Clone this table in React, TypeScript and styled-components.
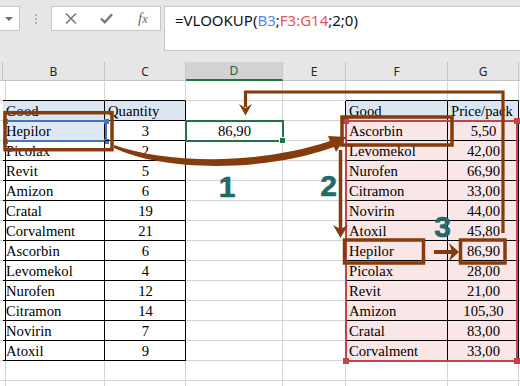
import React from "react";
import styled, { createGlobalStyle } from "styled-components";

const BROWN = "#843c0c";
const TEAL = "#1e6b6a";

const GlobalStyle = createGlobalStyle`
  html, body {
    margin: 0;
    padding: 0;
    background: #fff;
  }
  body {
    font-family: "Liberation Serif", serif;
  }
`;

const Window = styled.div`
  position: relative;
  width: 520px;
  height: 386px;
  overflow: hidden;
  background: #fff;
`;

/* ---------- formula bar ---------- */

const Toolbar = styled.div`
  display: flex;
  align-items: flex-start;
  box-sizing: border-box;
  height: 62px;
  padding-top: 6px;
  background: #e6e6e6;
`;

const NameBox = styled.div`
  box-sizing: border-box;
  width: 20px;
  height: 25px;
  display: flex;
  align-items: center;
  justify-content: center;
  background: #fff;
  border: 1px solid #c6c6c6;
  border-left: none;
`;

const DropArrow = styled.span`
  width: 0;
  height: 0;
  margin-left: -2px;
  border-left: 4px solid transparent;
  border-right: 4px solid transparent;
  border-top: 4px solid #6f6f6f;
`;

const Grip = styled.div`
  display: flex;
  flex-direction: column;
  gap: 2px;
  margin: 8px 0 0 15px;
`;

const GripDot = styled.span`
  width: 2px;
  height: 2px;
  background: #b4b4b4;
`;

const ButtonBox = styled.div`
  box-sizing: border-box;
  width: 110px;
  height: 25px;
  margin-left: 14px;
  display: flex;
  align-items: center;
  gap: 23px;
  padding-left: 13px;
  background: #fff;
  border: 1px solid #c6c6c6;
`;

const BarIcon = styled.svg`
  display: block;
  flex: none;
`;

const Fx = styled.span`
  font-family: "Liberation Serif", serif;
  font-style: italic;
  font-size: 15px;
  line-height: 1;
  color: #6b6b6b;
  margin-left: 2px;
  small {
    font-size: 12px;
  }
`;

const FormulaInput = styled.div`
  box-sizing: border-box;
  flex: 1;
  height: 45px;
  margin-left: 3px;
  padding: 3px 0 0 10px;
  background: #fff;
  border: 1px solid #c6c6c6;
  border-right: none;
  font-family: "Noto Sans", sans-serif;
  font-size: 15px;
  line-height: 20px;
  color: #111;
  white-space: nowrap;
`;

const Ref = styled.span<{ $color: string }>`
  color: ${(p) => p.$color};
`;

/* ---------- worksheet ---------- */

// the last column runs past the window edge, so it gets no letter
const COLS = [
  { id: "corner", label: "", w: 3 },
  { id: "B", label: "B", w: 102 },
  { id: "C", label: "C", w: 81 },
  { id: "D", label: "D", w: 97 },
  { id: "E", label: "E", w: 63 },
  { id: "F", label: "F", w: 102 },
  { id: "G", label: "G", w: 71 },
  { id: "H", label: "", w: 60 },
];

const ROWS = 16;

const goods: [string, number][] = [
  ["Hepilor", 3],
  ["Picolax", 2],
  ["Revit", 5],
  ["Amizon", 6],
  ["Cratal", 19],
  ["Corvalment", 21],
  ["Ascorbin", 6],
  ["Levomekol", 4],
  ["Nurofen", 12],
  ["Citramon", 14],
  ["Novirin", 7],
  ["Atoxil", 9],
];

const prices: [string, string][] = [
  ["Ascorbin", "5,50"],
  ["Levomekol", "42,00"],
  ["Nurofen", "66,90"],
  ["Citramon", "33,00"],
  ["Novirin", "44,00"],
  ["Atoxil", "45,80"],
  ["Hepilor", "86,90"],
  ["Picolax", "28,00"],
  ["Revit", "21,00"],
  ["Amizon", "105,30"],
  ["Cratal", "83,00"],
  ["Corvalment", "33,00"],
];

const Sheet = styled.div<{ $cols: string }>`
  display: grid;
  grid-template-columns: ${(p) => p.$cols};
  grid-template-rows: 19px;
  grid-auto-rows: 20px;
`;

const HeadCell = styled.div<{ $selected?: boolean }>`
  box-sizing: border-box;
  display: flex;
  align-items: center;
  justify-content: center;
  background: ${(p) => (p.$selected ? "#d2d2d2" : "#e6e6e6")};
  border-right: 1px solid #c6c6c6;
  border-bottom: ${(p) => (p.$selected ? "2px solid #217346" : "1px solid #c6c6c6")};
  font-family: "Noto Sans", sans-serif;
  font-size: 12px;
  color: ${(p) => (p.$selected ? "#1b5c36" : "#262626")};
`;

const Cell = styled.div<{
  $fill: string;
  $align: "left" | "center";
  $right: boolean;
  $bottom: boolean;
}>`
  position: relative;
  box-sizing: border-box;
  padding: 1px 2px 0 3px;
  background: ${(p) => p.$fill};
  border-right: 1px solid ${(p) => (p.$right ? "#000" : "#d4d4d4")};
  border-bottom: 1px solid ${(p) => (p.$bottom ? "#000" : "#d4d4d4")};
  font-family: "Liberation Serif", serif;
  font-size: 14.67px;
  line-height: 19px;
  color: #000;
  text-align: ${(p) => p.$align};
  white-space: nowrap;
`;

const RefFrame = styled.div`
  position: absolute;
  left: 1px;
  top: -1px;
  width: 103px;
  height: 22px;
  box-sizing: border-box;
  border: 2px solid #4472c4;
`;

const ActiveFrame = styled.div`
  position: absolute;
  left: -1px;
  top: -1px;
  width: 99px;
  height: 22px;
  box-sizing: border-box;
  border: 2px solid #217346;
  z-index: 1;
`;

const FillHandle = styled.span`
  position: absolute;
  right: -4px;
  bottom: -4px;
  width: 5px;
  height: 5px;
  background: #217346;
  border: 1px solid #fff;
`;

const RangeOutline = styled.div`
  position: absolute;
  left: 345px;
  top: 120px;
  width: 173px;
  height: 242px;
  box-sizing: border-box;
  border: 2px solid #c4434b;
`;

const Handle = styled.span<{ $color: string; $size: number; $h: "left" | "right"; $v: "top" | "bottom" }>`
  position: absolute;
  width: ${(p) => p.$size}px;
  height: ${(p) => p.$size}px;
  background: ${(p) => p.$color};
  ${(p) => p.$h}: ${(p) => -1 - p.$size / 2}px;
  ${(p) => p.$v}: ${(p) => -1 - p.$size / 2}px;
`;

const Overlay = styled.svg`
  position: absolute;
  left: 0;
  top: 0;
  pointer-events: none;
`;

const StepNo = styled.text`
  font-family: "Liberation Sans", Arial, sans-serif;
  font-weight: bold;
  font-size: 30px;
  fill: ${TEAL};
  stroke: ${TEAL};
  stroke-width: 0.6px;
  text-anchor: middle;
`;

function Corners({ color, size }: { color: string; size: number }) {
  return (
    <>
      <Handle $color={color} $size={size} $h="left" $v="top" />
      <Handle $color={color} $size={size} $h="right" $v="top" />
      <Handle $color={color} $size={size} $h="left" $v="bottom" />
      <Handle $color={color} $size={size} $h="right" $v="bottom" />
    </>
  );
}

const inTable = (r: number, c: number) =>
  r >= 2 && r <= 14 && (c === 1 || c === 2 || c === 5 || c === 6);

function cellContent(r: number, c: number): { text: string; align: "left" | "center"; fill: string } {
  const blank = { text: "", align: "left" as const, fill: "transparent" };
  const head = "#dce6f1";
  const pink = "#f9e6e7";
  if (r === 2) {
    if (c === 1) return { text: "Good", align: "left", fill: head };
    if (c === 2) return { text: "Quantity", align: "left", fill: head };
    if (c === 5) return { text: "Good", align: "left", fill: head };
    if (c === 6) return { text: "Price/pack", align: "left", fill: head };
  }
  if (r >= 3 && r <= 14) {
    const i = r - 3;
    if (c === 1) return { text: goods[i][0], align: "left", fill: r === 3 ? "#dfe8f5" : "transparent" };
    if (c === 2) return { text: String(goods[i][1]), align: "center", fill: "transparent" };
    if (c === 5) return { text: prices[i][0], align: "left", fill: pink };
    if (c === 6) return { text: prices[i][1], align: "center", fill: pink };
  }
  if (r === 3 && c === 3) return { text: "86,90", align: "center", fill: "transparent" };
  return blank;
}

export default function App() {
  const cols = COLS.map((c) => `${c.w}px`).join(" ");

  const body: React.ReactNode[] = [];
  for (let r = 1; r <= ROWS; r++) {
    COLS.forEach((_, c) => {
      const { text, align, fill } = cellContent(r, c);
      body.push(
        <Cell
          key={`${r}-${c}`}
          $fill={fill}
          $align={align}
          $right={inTable(r, c) || inTable(r, c + 1)}
          $bottom={inTable(r, c) || inTable(r + 1, c)}
        >
          {text}
          {r === 3 && c === 1 && (
            <RefFrame>
              <Corners color="#4472c4" size={5} />
            </RefFrame>
          )}
          {r === 3 && c === 3 && (
            <ActiveFrame>
              <FillHandle />
            </ActiveFrame>
          )}
        </Cell>
      );
    });
  }

  return (
    <Window>
      <GlobalStyle />
      <Toolbar>
        <NameBox>
          <DropArrow />
        </NameBox>
        <Grip>
          <GripDot />
          <GripDot />
          <GripDot />
        </Grip>
        <ButtonBox>
          <BarIcon width="12" height="11" viewBox="0 0 12 11">
            <path d="M1 0.5 L11 10.5 M11 0.5 L1 10.5" stroke="#777" strokeWidth="1.5" fill="none" />
          </BarIcon>
          <BarIcon width="13" height="11" viewBox="0 0 13 11">
            <path d="M1 5.5 L4.8 9.3 L12 1.2" stroke="#777" strokeWidth="2.4" fill="none" />
          </BarIcon>
          <Fx>
            f<small>x</small>
          </Fx>
        </ButtonBox>
        <FormulaInput>
          =VLOOKUP(<Ref $color="#5b86e5">B3</Ref>;<Ref $color="#e6555c">F3:G14</Ref>;2;0)
        </FormulaInput>
      </Toolbar>

      <Sheet $cols={cols}>
        {COLS.map((c) => (
          <HeadCell key={c.id} $selected={c.id === "D"}>
            {c.label}
          </HeadCell>
        ))}
        {body}
      </Sheet>

      <RangeOutline>
        <Corners color="#c4434b" size={6} />
      </RangeOutline>

      <Overlay width="520" height="386" viewBox="0 0 520 386">
        <g fill="none" stroke={BROWN}>
          {/* lookup value box and matched rows */}
          <rect x="5" y="112.7" width="107" height="37" strokeWidth="3.5" />
          <rect x="342" y="117" width="110" height="28" strokeWidth="3.5" />
          <rect x="344.5" y="240" width="79" height="23" strokeWidth="3.5" />
          <rect x="460.5" y="240" width="44.5" height="23" strokeWidth="3.5" />
          {/* result carried back to D3 */}
          <path d="M503 233 V92 H245.5 V107" strokeWidth="3.2" />
          {/* search down the first column */}
          <path d="M340.5 150 V230" strokeWidth="3.5" />
          {/* step 3 pointer */}
          <path d="M434 252 H452" strokeWidth="4" />
        </g>
        <g fill={BROWN}>
          <path d="M114 145 C165 163, 255 166, 330 141 L328 136 L346 137 L336 152 L334 147 C258 174, 160 170, 114 148 Z" />
          <path d="M239 104 L245.5 115.5 L252 104 L245.5 108 Z" />
          <path d="M333 225 L340.5 238 L348 225 L340.5 229 Z" />
          <path d="M449 243 L459 252 L449 261 L452 252 Z" />
        </g>
        <StepNo x="227" y="197">1</StepNo>
        <StepNo x="328.5" y="196">2</StepNo>
        <StepNo x="442.5" y="237">3</StepNo>
      </Overlay>
    </Window>
  );
}
